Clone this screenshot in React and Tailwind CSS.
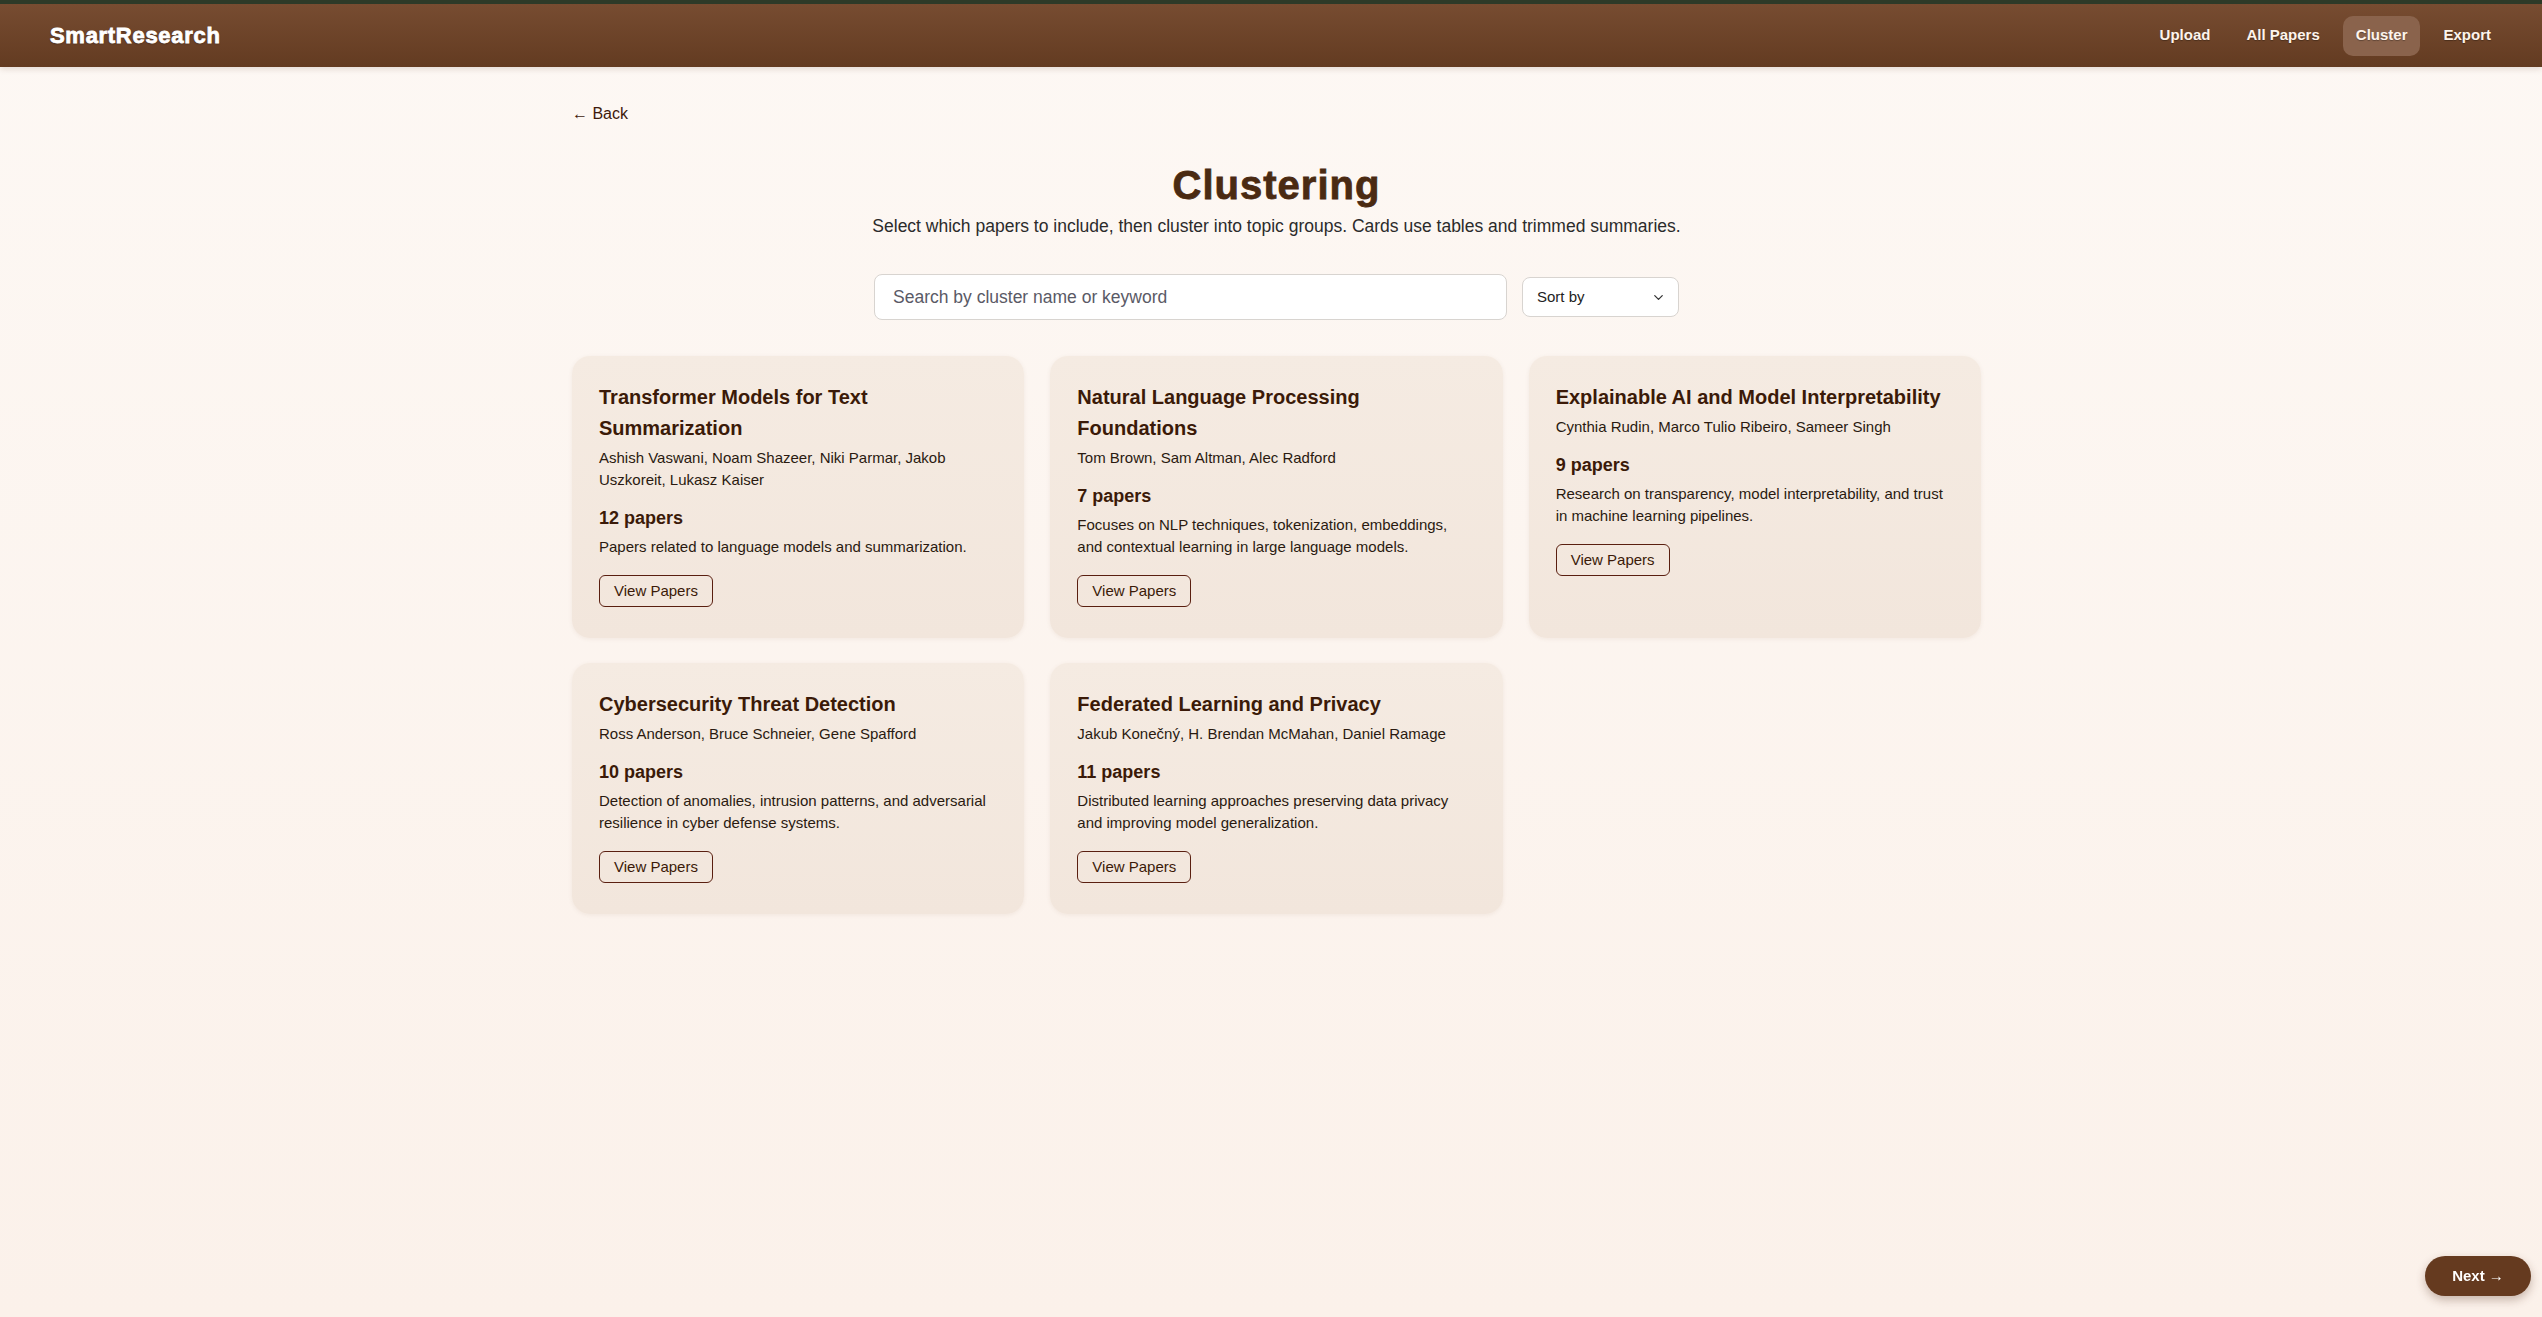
import { ChevronDown } from 'lucide-react'

const CLUSTERS = [
  {
    id: 'transformers',
    title: 'Transformer Models for Text Summarization',
    authors: 'Ashish Vaswani, Noam Shazeer, Niki Parmar, Jakob Uszkoreit, Lukasz Kaiser',
    count: 12,
    summary: 'Papers related to language models and summarization.'
  },
  {
    id: 'nlp',
    title: 'Natural Language Processing Foundations',
    authors: 'Tom Brown, Sam Altman, Alec Radford',
    count: 7,
    summary: 'Focuses on NLP techniques, tokenization, embeddings, and contextual learning in large language models.'
  },
  {
    id: 'xai',
    title: 'Explainable AI and Model Interpretability',
    authors: 'Cynthia Rudin, Marco Tulio Ribeiro, Sameer Singh',
    count: 9,
    summary: 'Research on transparency, model interpretability, and trust in machine learning pipelines.'
  },
  {
    id: 'security',
    title: 'Cybersecurity Threat Detection',
    authors: 'Ross Anderson, Bruce Schneier, Gene Spafford',
    count: 10,
    summary: 'Detection of anomalies, intrusion patterns, and adversarial resilience in cyber defense systems.'
  },
  {
    id: 'federated',
    title: 'Federated Learning and Privacy',
    authors: 'Jakub Konečný, H. Brendan McMahan, Daniel Ramage',
    count: 11,
    summary: 'Distributed learning approaches preserving data privacy and improving model generalization.'
  }
]

const NAV = ['Upload', 'All Papers', 'Cluster', 'Export']

function ClusterCard({ cluster }) {
  return (
    <div className="rounded-[18px] bg-gradient-to-b from-[#f5ebe2] to-[#f2e6dc] px-[27px] pt-[26px] pb-[31px] shadow-[0_1px_4px_rgba(120,80,50,0.08)]">
      <h2 className="text-[20px] font-bold leading-[31px] text-[#3b1a08]">{cluster.title}</h2>
      <p className="mt-[3px] text-[15px] leading-[22px] text-[#2a1a10]">{cluster.authors}</p>
      <p className="mt-[14px] text-[18px] font-bold leading-[27px] text-[#3b1a08]">{cluster.count} papers</p>
      <p className="mt-[4px] text-[15px] leading-[22px] text-[#2a1a10]">{cluster.summary}</p>
      <button className="mt-[17px] h-[32px] rounded-[6px] border border-[#5a1f10] px-[14px] text-[15px] text-[#3b1a08]">
        View Papers
      </button>
    </div>
  )
}

export default function App() {
  return (
    <div className="min-h-screen bg-gradient-to-b from-[#fdf8f4] to-[#fbf1ea] font-['Liberation_Sans',Arial,sans-serif]">
      <header className="border-t-[4px] border-[#2d3a28] bg-gradient-to-b from-[#774c31] to-[#633b21] shadow-[0_2px_6px_rgba(80,40,20,0.15)]">
        <div className="flex h-[63px] items-center justify-between pl-[50px] pr-[38px]">
          <span className="text-[22px] font-bold tracking-[0.7px] text-white [-webkit-text-stroke:0.8px_white] [text-shadow:0_1px_2px_rgba(0,0,0,0.35)]">
            SmartResearch
          </span>
          <nav className="flex items-center gap-[10px]">
            {NAV.map((item) => (
              <a
                key={item}
                className={`flex h-[40px] items-center rounded-[10px] px-[13px] text-[15px] font-bold text-[#fdf4ec] [text-shadow:0_1px_1px_rgba(0,0,0,0.3)] ${
                  item === 'Cluster' ? 'bg-[#8a634c]' : ''
                }`}
              >
                {item}
              </a>
            ))}
          </nav>
        </div>
      </header>

      <main className="flex justify-center pl-[11px] pb-[80px]">
        <div className="w-[1409px]">
          <div className="pt-[35px]">
            <a className="text-[16px] leading-[24px] text-[#3d1a0c]">← Back</a>
          </div>

          <div className="mt-[35px] text-center">
            <h1 className="text-[40px] font-bold leading-[48px] tracking-[1px] text-[#4a2a12] [-webkit-text-stroke:0.8px_#4a2a12]">Clustering</h1>
            <p className="mt-[4px] text-[17.5px] leading-[26px] text-[#2b2b2b]">
              Select which papers to include, then cluster into topic groups. Cards use tables and trimmed summaries.
            </p>
          </div>

          <div className="mt-[35px] flex items-center justify-center gap-[15px]">
            <input
              placeholder="Search by cluster name or keyword"
              className="h-[46px] w-[633px] rounded-[8px] border border-[#d8d4d0] bg-white px-[18px] text-[17.5px] text-[#333] outline-none placeholder:text-[#5a5a66]"
            />
            <div className="flex h-[40px] w-[157px] items-center justify-between rounded-[8px] border border-[#d8d4d0] bg-white pl-[14px] pr-[12px] text-[15px] text-[#222]">
              <span>Sort by</span>
              <ChevronDown className="h-[15px] w-[15px] text-[#333]" strokeWidth={2} />
            </div>
          </div>

          <div className="mt-[36px] grid grid-cols-3 gap-x-[26px] gap-y-[25px]">
            {CLUSTERS.map((c) => (
              <ClusterCard key={c.id} cluster={c} />
            ))}
          </div>
        </div>
      </main>

      <button className="fixed bottom-[21px] right-[11px] flex h-[40px] w-[106px] items-center justify-center rounded-full bg-[#653a1f] text-[15px] font-bold text-white shadow-[0_4px_10px_rgba(80,40,20,0.3)]">
        Next →
      </button>
    </div>
  )
}
